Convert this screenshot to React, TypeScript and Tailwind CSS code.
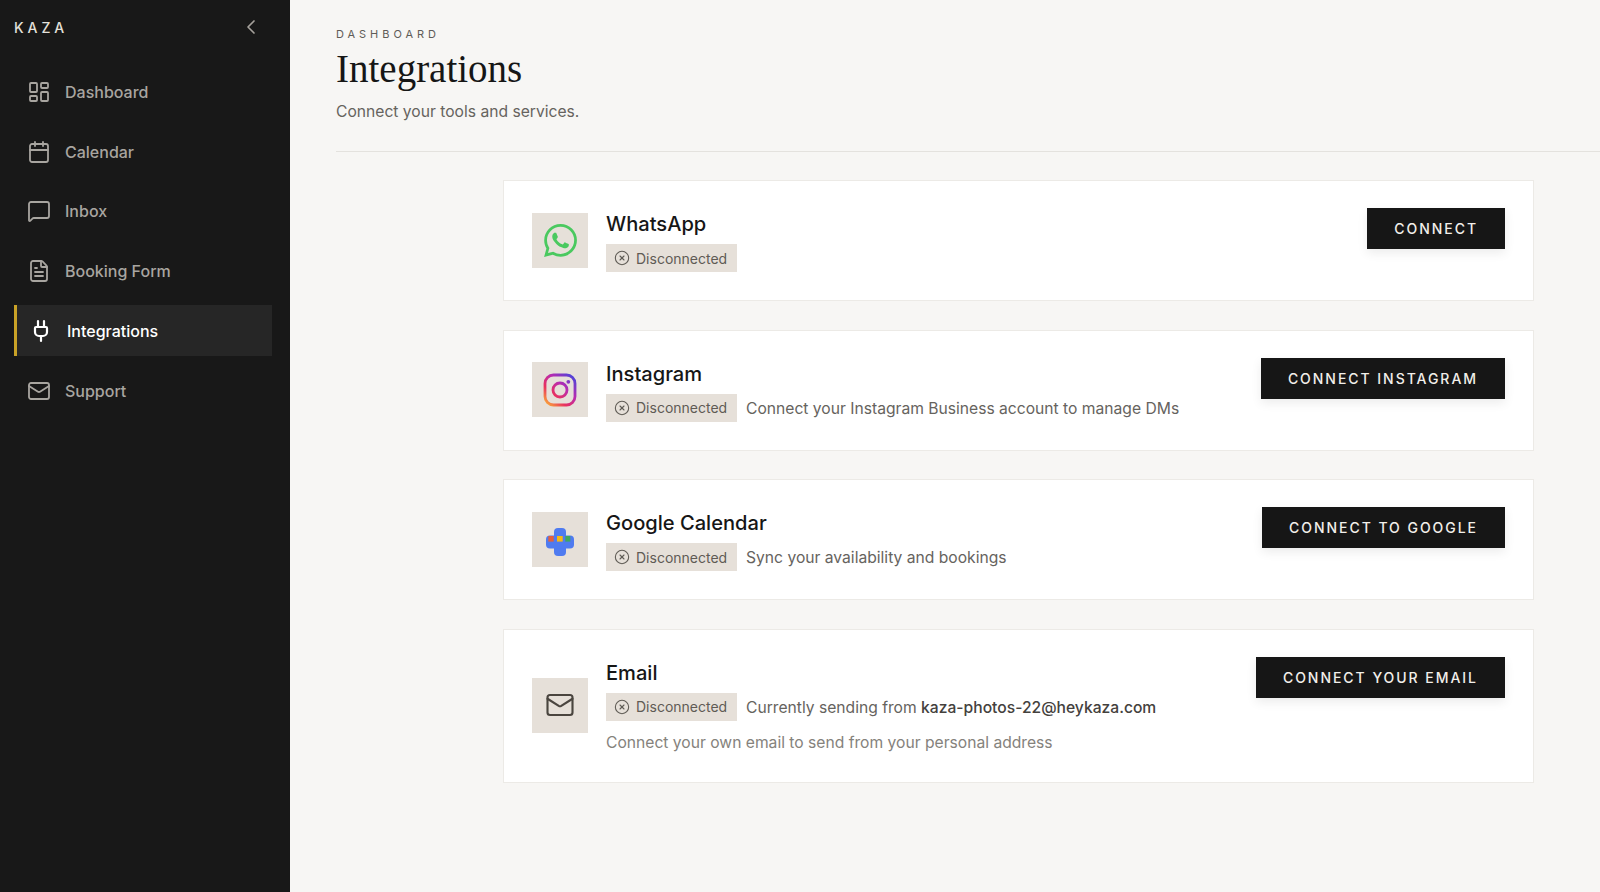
import {
  Calendar,
  ChevronLeft,
  CircleX,
  FileText,
  LayoutDashboard,
  Mail,
  MessageSquare,
  Plug,
} from "lucide-react";
import { SiWhatsapp } from "react-icons/si";
import type { ReactNode } from "react";

const navItems = [
  { label: "Dashboard", icon: LayoutDashboard },
  { label: "Calendar", icon: Calendar },
  { label: "Inbox", icon: MessageSquare },
  { label: "Booking Form", icon: FileText },
  { label: "Integrations", icon: Plug, active: true },
  { label: "Support", icon: Mail },
];

const InstagramIcon = () => (
  <svg width="34" height="34" viewBox="0 0 34 34" fill="none">
    <defs>
      <linearGradient id="ig" gradientUnits="userSpaceOnUse" x1="4" y1="31" x2="30" y2="3">
        <stop offset="0" stopColor="#f9a03c" />
        <stop offset="0.3" stopColor="#e8315f" />
        <stop offset="0.62" stopColor="#b92bb0" />
        <stop offset="1" stopColor="#4f43d8" />
      </linearGradient>
    </defs>
    <rect x="2" y="2" width="30" height="30" rx="8.5" stroke="url(#ig)" strokeWidth="2.8" />
    <circle cx="17" cy="17" r="7" stroke="url(#ig)" strokeWidth="2.8" />
    <circle cx="25.3" cy="8.8" r="1.9" fill="url(#ig)" />
  </svg>
);

const GoogleIcon = () => (
  <svg width="28" height="28" viewBox="0 0 28 28" className="mt-[6px]">
    <rect x="8" y="0" width="12" height="28" rx="4" fill="#4f7bf0" />
    <rect x="0" y="7.5" width="28" height="13" rx="4" fill="#4f7bf0" />
    <rect x="2.3" y="8" width="5.4" height="5.6" fill="#e2603f" />
    <rect x="11" y="8" width="5.7" height="5.6" fill="#f5b914" />
    <rect x="19.3" y="8" width="5" height="5.6" fill="#3fa760" />
  </svg>
);

const integrations: {
  name: string;
  icon: ReactNode;
  action: string;
  note?: ReactNode;
  sub?: string;
}[] = [
  {
    name: "WhatsApp",
    icon: <SiWhatsapp size={33} color="#4ac95f" />,
    action: "Connect",
  },
  {
    name: "Instagram",
    icon: <InstagramIcon />,
    action: "Connect Instagram",
    note: "Connect your Instagram Business account to manage DMs",
  },
  {
    name: "Google Calendar",
    icon: <GoogleIcon />,
    action: "Connect to Google",
    note: "Sync your availability and bookings",
  },
  {
    name: "Email",
    icon: <Mail size={30} strokeWidth={1.7} color="#4a453f" />,
    action: "Connect your email",
    note: (
      <>
        Currently sending from <span className="font-medium text-[#44413d]">kaza-photos-22@heykaza.com</span>
      </>
    ),
    sub: "Connect your own email to send from your personal address",
  },
];

const Sidebar = () => (
  <aside className="flex h-full w-[290px] shrink-0 flex-col bg-[#181818] px-[14px]">
    <div className="flex h-[54px] items-center justify-between pr-[13px]">
      <span className="text-[14px] font-medium tracking-[0.28em] text-[#e4e1db]">KAZA</span>
      <ChevronLeft size={24} strokeWidth={1.7} className="text-[#a5a19b]" />
    </div>
    <nav className="mt-[12.4px] mr-1 flex flex-col gap-[8.75px]">
      {navItems.map((item) => {
        const Icon = item.icon;
        return (
          <div
            key={item.label}
            className={`flex h-[51px] items-center gap-[14px] text-[16px] ${
              item.active
                ? "border-l-[3px] border-[#c9a227] bg-[#262626] pl-[12px] font-medium text-white"
                : "pl-[13px] font-[450] text-[#a8a5a0]"
            }`}
          >
            <Icon size={24} strokeWidth={item.active ? 2.2 : 1.8} />
            {item.label}
          </div>
        );
      })}
    </nav>
  </aside>
);

const Badge = () => (
  <span className="flex h-[28px] w-[131px] shrink-0 items-center gap-[6px] bg-[#e6e0d9] pl-[8px] text-[14px] text-[#5f5b55]">
    <CircleX size={16} strokeWidth={1.6} />
    Disconnected
  </span>
);

export default function App() {
  return (
    <div className="flex h-screen overflow-hidden bg-[#f7f6f4] font-['Inter',sans-serif]">
      <Sidebar />
      <main className="min-w-0 flex-1 pl-[46px]">
        <header className="h-[152px] border-b border-[#e4e2de] pt-[28px]">
          <p className="text-[11px] leading-[12px] tracking-[0.36em] text-[#5f5c57]">DASHBOARD</p>
          <h1 className="mt-[6px] font-['Liberation_Serif',serif] text-[39px] leading-[46px] text-[#161616]">
            Integrations
          </h1>
          <p className="mt-[8px] text-[15.65px] leading-[24px] text-[#66635e]">
            Connect your tools and services.
          </p>
        </header>

        <div className="mt-[28px] ml-[167px] flex w-[1031px] flex-col gap-[28.5px]">
          {integrations.map((item) => (
            <section
              key={item.name}
              className="flex items-start justify-between border border-[#eceae6] bg-white pt-[27px] pr-[28px] pb-[28px] pl-[28px]"
            >
              <div className="flex items-center gap-[18px]">
                <div className="flex h-[55px] w-[56px] shrink-0 items-center justify-center bg-[#e6e0d9]">
                  {item.icon}
                </div>
                <div className="flex flex-col pt-px">
                  <h2 className="text-[20.1px] leading-[30px] font-medium text-[#161616]">{item.name}</h2>
                  <div className="mt-[5px] flex items-center gap-[9px]">
                    <Badge />
                    {item.note && (
                      <span className="pt-[2px] text-[15.65px] leading-[24px] text-[#66635e]">{item.note}</span>
                    )}
                  </div>
                  {item.sub && (
                    <p className="mt-[10px] -mb-px text-[15.65px] leading-[24px] text-[#85827c]">{item.sub}</p>
                  )}
                </div>
              </div>
              <button className="h-[41px] shrink-0 bg-[#161616] px-[27px] text-[14px] font-medium tracking-[0.14em] text-[#f2efea] uppercase shadow-[0_4px_10px_rgba(0,0,0,0.08)]">
                {item.action}
              </button>
            </section>
          ))}
        </div>
      </main>
    </div>
  );
}
